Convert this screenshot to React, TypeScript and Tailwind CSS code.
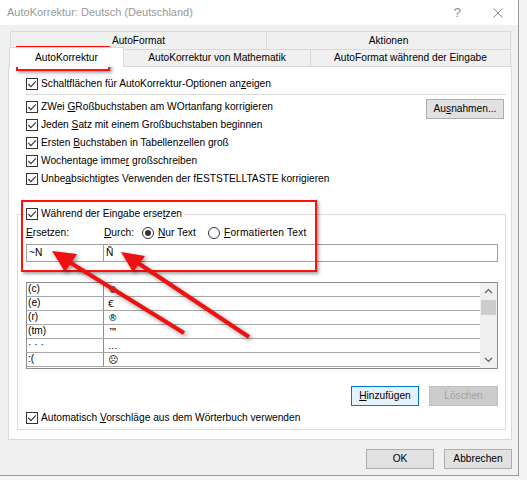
import type { ReactNode } from "react";

function CheckBox() {
  return (
    <span className="grid size-[12px] shrink-0 place-items-center border border-[#333333] bg-white">
      <svg aria-hidden="true" className="size-[10px]" viewBox="0 0 10 10">
        <path d="M1.3 5 L3.9 7.6 L8.8 2.4" fill="none" stroke="#333333" strokeWidth="1.1" />
      </svg>
    </span>
  );
}

function CheckRow({ children, className = "" }: { children: ReactNode; className?: string }) {
  return (
    <div className={`flex h-[18px] items-center gap-[3px] ${className}`}>
      <CheckBox />
      <span className="whitespace-nowrap">{children}</span>
    </div>
  );
}

function Radio({ checked = false }: { checked?: boolean }) {
  return (
    <span className="grid size-[12px] shrink-0 place-items-center rounded-full border border-[#333333] bg-white">
      {checked ? <span className="size-[6px] rounded-full bg-[#333333]" /> : null}
    </span>
  );
}

function Button({
  children,
  variant = "normal",
  className = "",
}: {
  children: ReactNode;
  variant?: "normal" | "default" | "disabled";
  className?: string;
}) {
  const look =
    variant === "default"
      ? "border-[#0078d7] bg-[#e5f1fb] text-black"
      : variant === "disabled"
        ? "border-[#bfbfbf] bg-[#cccccc] text-[#a3a3a3]"
        : "border-[#adadad] bg-[#e1e1e1] text-black";
  return (
    <div className={`flex h-[20px] items-center justify-center border ${look} ${className}`}>
      {children}
    </div>
  );
}

function Chevron({ down = false }: { down?: boolean }) {
  return (
    <svg aria-hidden="true" className="size-[9px]" viewBox="0 0 9 9">
      <path
        d={down ? "M1 3 L4.5 6.5 L8 3" : "M1 6 L4.5 2.5 L8 6"}
        fill="none"
        stroke="#606060"
        strokeWidth="1.2"
      />
    </svg>
  );
}

const entries: [string, string][] = [
  ["(c)", "©"],
  ["(e)", "€"],
  ["(r)", "®"],
  ["(tm)", "™"],
  ["· · ·", "…"],
  [":(", "☹"],
];

function TitleBar() {
  return (
    <div className="flex h-[25px] shrink-0 items-center bg-white pl-[7px] text-[11px] text-[#999999]">
      <span className="flex-1 whitespace-nowrap">AutoKorrektur: Deutsch (Deutschland)</span>
      <span className="mr-[32px] text-[13px] text-[#8a8a8a]">?</span>
      <svg aria-hidden="true" className="mr-[15px] size-[10px]" viewBox="0 0 10 10">
        <path d="M0.5 0.5 L9.5 9.5 M9.5 0.5 L0.5 9.5" stroke="#8a8a8a" strokeWidth="1" />
      </svg>
    </div>
  );
}

function Tabs() {
  return (
    <div>
      <div className="ml-[2px] mr-[1px] flex h-[18px]">
        <div className="flex w-[257px] items-center justify-center border-t border-r border-l border-[#d9d9d9]">
          AutoFormat
        </div>
        <div className="flex flex-1 items-center justify-center border-t border-r border-[#d9d9d9]">
          Aktionen
        </div>
      </div>
      <div className="ml-[1px] mr-[1px] flex h-[17px] items-end">
        <div className="relative z-10 -mb-px flex h-[20px] w-[115px] items-center justify-center border-t border-r border-l border-[#d9d9d9] bg-white pt-[1px]">
          AutoKorrektur
        </div>
        <div className="flex h-[17px] w-[187px] items-center justify-center border-t border-r border-[#d9d9d9]">
          AutoKorrektur von Mathematik
        </div>
        <div className="flex h-[17px] flex-1 items-center justify-center border-t border-r border-[#d9d9d9]">
          AutoFormat während der Eingabe
        </div>
      </div>
    </div>
  );
}

function ReplaceGroup() {
  return (
    <div className="mt-[26px] mr-[5px] mb-[9px] ml-[8px] border border-[#dcdcdc] pr-[7px] pb-[2px] pl-[8px]">
      <div className="-mt-[10px] flex h-[18px]">
        <div className="flex items-center gap-[3px] bg-white pr-[2px]">
          <CheckBox />
          <span className="whitespace-nowrap">
            Während der Eingabe erse<u>t</u>zen
          </span>
        </div>
      </div>

      <div className="mt-[1px] flex h-[18px] items-center">
        <span className="w-[78px]">
          <u>E</u>rsetzen:
        </span>
        <span className="w-[38px]">
          <u>D</u>urch:
        </span>
        <Radio checked />
        <span className="ml-[4px] w-[50px]">
          <u>N</u>ur Text
        </span>
        <Radio />
        <span className="ml-[4px] tracking-[0.2px]">
          <u>F</u>ormatierten Text
        </span>
      </div>

      <div className="mt-[2px] flex h-[18px]">
        <div className="flex w-[78px] items-center border border-[#a0a0a0] pl-[2px]">~N</div>
        <div className="flex flex-1 items-center border border-l-0 border-[#a0a0a0] pl-[2px]">Ñ</div>
      </div>

      <div className="mt-[20px] flex h-[87px] border border-[#8c8c8c] bg-white">
        <div className="flex-1">
          {entries.map(([from, to]) => (
            <div className="flex h-[14px] border-b border-[#a8a8a8]" key={from}>
              <span className="flex w-[77px] items-center border-r border-[#8c8c8c] pl-[1px] leading-none">
                {from}
              </span>
              <span className="flex items-center pl-[4px] font-['DejaVu_Sans',sans-serif] text-[9.5px] leading-none">
                {to}
              </span>
            </div>
          ))}
        </div>
        <div className="flex w-[17px] flex-col bg-[#f0f0f0]">
          <div className="grid h-[17px] place-items-center">
            <Chevron />
          </div>
          <div className="mx-[1px] h-[15px] bg-[#cdcdcd]" />
          <div className="flex-1" />
          <div className="grid h-[17px] place-items-center">
            <Chevron down />
          </div>
        </div>
      </div>

      <div className="mt-[17px] flex justify-end gap-[10px]">
        <Button className="w-[68px]" variant="default">
          <span>
            <u>H</u>inzufügen
          </span>
        </Button>
        <Button className="w-[69px]" variant="disabled">
          Löschen
        </Button>
      </div>

      <CheckRow className="mt-[3px]">
        Automatisch <u>V</u>orschläge aus dem Wörterbuch verwenden
      </CheckRow>
    </div>
  );
}

function Panel() {
  return (
    <div className="border border-[#d9d9d9] bg-white pt-[8px]">
      <CheckRow className="pl-[17px]">
        Schaltflächen für AutoKorrektur-Optionen an<u>z</u>eigen
      </CheckRow>
      <div className="mt-[1px] mr-[5px] ml-[17px] h-px bg-[#dadada]" />
      <div className="mt-[3px] flex justify-between pr-[7px] pl-[17px]">
        <div>
          <CheckRow>
            ZWei <u>G</u>Roßbuchstaben am WOrtanfang korrigieren
          </CheckRow>
          <CheckRow>
            Jeden <u>S</u>atz mit einem Großbuchstaben beginnen
          </CheckRow>
          <CheckRow>
            Ersten <u>B</u>uchstaben in Tabellenzellen groß
          </CheckRow>
          <CheckRow>
            Wochentage imme<u>r</u> großschreiben
          </CheckRow>
          <CheckRow>
            Unbe<u>a</u>bsichtigtes Verwenden der fESTSTELLTASTE korrigieren
          </CheckRow>
        </div>
        <Button className="mt-[1px] w-[78px]">
          <span>
            Au<u>s</u>nahmen...
          </span>
        </Button>
      </div>
      <ReplaceGroup />
    </div>
  );
}

function Arrows() {
  return (
    <svg
      aria-hidden="true"
      className="pointer-events-none absolute top-0 left-0 h-[480px] w-[527px] drop-shadow-[2px_2px_2px_rgba(0,0,0,0.4)]"
      viewBox="0 0 527 480"
    >
      <line stroke="#f01010" strokeWidth="4" x1="184" x2="66" y1="333" y2="260" />
      <polygon fill="#f01010" points="52,251 77,254 65,272" />
      <line stroke="#f01010" strokeWidth="4" x1="249" x2="135" y1="337" y2="261" />
      <polygon fill="#f01010" points="121,252 145,256 133,272" />
    </svg>
  );
}

export default function App() {
  return (
    <div className="relative h-[480px] w-[527px] overflow-hidden bg-[#f4f4f4] font-['Liberation_Sans',Arial,sans-serif] text-[10.2px] text-black">
      <div className="flex h-[476px] w-[519px] flex-col border-r border-b border-[#9a9a9a] bg-[#f0f0f0]">
        <TitleBar />
        <div className="pt-[6px] pr-[6px] pl-[8px]">
          <Tabs />
          <Panel />
          <div className="mt-[9px] flex justify-end gap-[10px]">
            <Button className="w-[68px]">OK</Button>
            <Button className="w-[68px]">Abbrechen</Button>
          </div>
        </div>
      </div>

      <div className="pointer-events-none absolute top-[46px] left-[16px] h-[25px] w-[94px] border-2 border-[#ff1010] shadow-[2px_2px_3px_rgba(0,0,0,0.35)]" />
      <div className="pointer-events-none absolute top-[200px] left-[21px] h-[72px] w-[296px] border-2 border-[#ff1010] shadow-[2px_2px_3px_rgba(0,0,0,0.35)]" />
      <Arrows />
    </div>
  );
}
